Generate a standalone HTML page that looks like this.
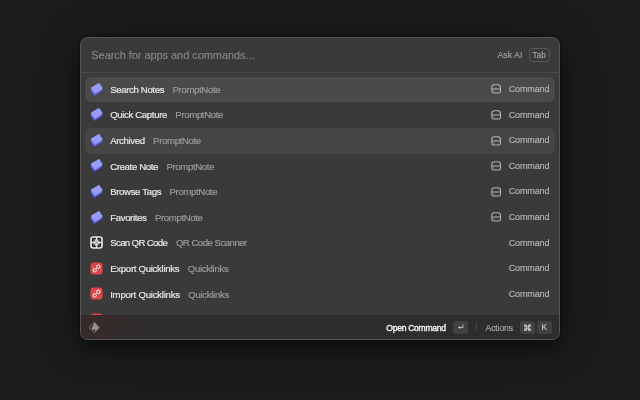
<!DOCTYPE html>
<html><head><meta charset="utf-8">
<style>
*{margin:0;padding:0;box-sizing:border-box}
html,body{width:640px;height:400px;overflow:hidden;background:#1c1c1c;font-family:"Liberation Sans",sans-serif;-webkit-font-smoothing:antialiased}
.win{will-change:transform;position:absolute;left:80px;top:37px;width:480px;height:303px;background:#3a3a3a;border:1px solid #565656;border-radius:7.5px;overflow:hidden;box-shadow:0 0 0 1px rgba(0,0,0,0.35),0 8px 22px rgba(0,0,0,0.5),0 4px 44px rgba(0,0,0,0.25)}
.sep{position:absolute;left:0;top:34px;width:100%;height:1px;background:#474747}
.ph{position:absolute;left:10.3px;top:6px;font-size:11px;line-height:22px;color:#898989;letter-spacing:-0.06px;white-space:pre;-webkit-text-stroke:0.1px #898989}
.ask{position:absolute;left:416.5px;top:9px;font-size:8.8px;line-height:16px;color:#a0a0a0;white-space:pre;-webkit-text-stroke:0.15px #a0a0a0}
.tab{position:absolute;left:447.6px;top:9.6px;width:21.2px;height:14.4px;border:1px solid #585858;border-radius:3.5px;font-size:8.2px;line-height:14px;color:#aaaaaa;text-align:center;-webkit-text-stroke:0.1px #aaa}
.row{position:absolute;left:4px;width:470px;height:25.6px}
.row.hl{background:#4a4a4a;border-radius:6px}
.row.hl2{background:#454545;border-radius:6px}
.ico{position:absolute;left:5px;top:5.7px;width:13px;height:13px}
.t{position:absolute;left:25.2px;top:-0.1px;line-height:25.6px;font-size:9.6px;letter-spacing:-0.35px;color:#e8e8e8;white-space:pre;-webkit-text-stroke:0.18px #e8e8e8}
.t span{-webkit-text-stroke:0.15px #9d9d9d}
.t span{color:#9d9d9d;margin-left:8.4px}
.rc{position:absolute;right:5.7px;top:0.1px;line-height:25.6px;font-size:9px;letter-spacing:-0.12px;color:#b0b0b0;white-space:pre;-webkit-text-stroke:0.2px #b0b0b0}
.di{position:absolute;left:406px;top:7.5px;width:10.5px;height:10px}
.foot{position:absolute;left:0;top:276.6px;width:100%;height:26px;background:radial-gradient(ellipse 55px 60px at 15px 4px,rgba(72,38,38,0.42),rgba(72,38,38,0.2) 50%,rgba(72,38,38,0) 100%),#2d2d2d}
.ft{position:absolute;top:1.4px;line-height:24px;font-size:8.6px;white-space:pre}
.key{position:absolute;top:6.4px;height:13px;background:#414141;border-radius:3px;color:#c8c8c8;font-size:8.4px;line-height:13px;text-align:center}
</style></head><body>
<div class="win">
  <div class="ph">Search for apps and commands...</div>
  <div class="ask">Ask AI</div>
  <div class="tab">Tab</div>
  <div class="sep"></div>

  <div class="row hl" style="top:38.9px">
    <svg class="ico" viewBox="0 0 13 13"><g stroke-linejoin="round" stroke-width="1.8">
      <path d="M8.3 3.1 L11.0 7.5 L4.5 11.7 L1.4 7.2 Z" fill="#4f57ef" stroke="#4f57ef"/>
      <path d="M8.6 2.0 L11.3 6.4 L4.8 10.6 L1.7 6.1 Z" fill="#6a72f4" stroke="#6a72f4"/>
      <path d="M8.9 0.9 L11.6 5.2 L5.1 9.4 L2.0 5.0 Z" fill="#979cf8" stroke="#979cf8"/></g></svg>
    <div class="t">Search Notes<span>PromptNote</span></div>
    <svg class="di" viewBox="0 0 10.5 10"><g>
      <path d="M0.8 7.2 V3.4 Q0.8 0.7 3.5 0.7 H6.8 Q9.5 0.7 9.5 3.4 V7.2 Q9.5 9.0 7.7 9.0 H2.6 Q0.8 9.0 0.8 7.2 Z M0.8 5.0 H9.5" fill="none" stroke="#b4b4b4" stroke-width="1.05"/>
      <line x1="2.3" y1="7.0" x2="3.5" y2="7.0" stroke="#b4b4b4" stroke-width="0.8"/></g></svg>
    <div class="rc">Command</div>
  </div>
  <div class="row" style="top:64.5px">
    <svg class="ico" viewBox="0 0 13 13"><g stroke-linejoin="round" stroke-width="1.8">
      <path d="M8.3 3.1 L11.0 7.5 L4.5 11.7 L1.4 7.2 Z" fill="#4f57ef" stroke="#4f57ef"/>
      <path d="M8.6 2.0 L11.3 6.4 L4.8 10.6 L1.7 6.1 Z" fill="#6a72f4" stroke="#6a72f4"/>
      <path d="M8.9 0.9 L11.6 5.2 L5.1 9.4 L2.0 5.0 Z" fill="#979cf8" stroke="#979cf8"/></g></svg>
    <div class="t">Quick Capture<span>PromptNote</span></div>
    <svg class="di" viewBox="0 0 10.5 10"><g>
      <path d="M0.8 7.2 V3.4 Q0.8 0.7 3.5 0.7 H6.8 Q9.5 0.7 9.5 3.4 V7.2 Q9.5 9.0 7.7 9.0 H2.6 Q0.8 9.0 0.8 7.2 Z M0.8 5.0 H9.5" fill="none" stroke="#b4b4b4" stroke-width="1.05"/>
      <line x1="2.3" y1="7.0" x2="3.5" y2="7.0" stroke="#b4b4b4" stroke-width="0.8"/></g></svg>
    <div class="rc">Command</div>
  </div>
  <div class="row hl2" style="top:90.1px">
    <svg class="ico" viewBox="0 0 13 13"><g stroke-linejoin="round" stroke-width="1.8">
      <path d="M8.3 3.1 L11.0 7.5 L4.5 11.7 L1.4 7.2 Z" fill="#4f57ef" stroke="#4f57ef"/>
      <path d="M8.6 2.0 L11.3 6.4 L4.8 10.6 L1.7 6.1 Z" fill="#6a72f4" stroke="#6a72f4"/>
      <path d="M8.9 0.9 L11.6 5.2 L5.1 9.4 L2.0 5.0 Z" fill="#979cf8" stroke="#979cf8"/></g></svg>
    <div class="t">Archived<span>PromptNote</span></div>
    <svg class="di" viewBox="0 0 10.5 10"><g>
      <path d="M0.8 7.2 V3.4 Q0.8 0.7 3.5 0.7 H6.8 Q9.5 0.7 9.5 3.4 V7.2 Q9.5 9.0 7.7 9.0 H2.6 Q0.8 9.0 0.8 7.2 Z M0.8 5.0 H9.5" fill="none" stroke="#b4b4b4" stroke-width="1.05"/>
      <line x1="2.3" y1="7.0" x2="3.5" y2="7.0" stroke="#b4b4b4" stroke-width="0.8"/></g></svg>
    <div class="rc">Command</div>
  </div>
  <div class="row" style="top:115.7px">
    <svg class="ico" viewBox="0 0 13 13"><g stroke-linejoin="round" stroke-width="1.8">
      <path d="M8.3 3.1 L11.0 7.5 L4.5 11.7 L1.4 7.2 Z" fill="#4f57ef" stroke="#4f57ef"/>
      <path d="M8.6 2.0 L11.3 6.4 L4.8 10.6 L1.7 6.1 Z" fill="#6a72f4" stroke="#6a72f4"/>
      <path d="M8.9 0.9 L11.6 5.2 L5.1 9.4 L2.0 5.0 Z" fill="#979cf8" stroke="#979cf8"/></g></svg>
    <div class="t">Create Note<span>PromptNote</span></div>
    <svg class="di" viewBox="0 0 10.5 10"><g>
      <path d="M0.8 7.2 V3.4 Q0.8 0.7 3.5 0.7 H6.8 Q9.5 0.7 9.5 3.4 V7.2 Q9.5 9.0 7.7 9.0 H2.6 Q0.8 9.0 0.8 7.2 Z M0.8 5.0 H9.5" fill="none" stroke="#b4b4b4" stroke-width="1.05"/>
      <line x1="2.3" y1="7.0" x2="3.5" y2="7.0" stroke="#b4b4b4" stroke-width="0.8"/></g></svg>
    <div class="rc">Command</div>
  </div>
  <div class="row" style="top:141.3px">
    <svg class="ico" viewBox="0 0 13 13"><g stroke-linejoin="round" stroke-width="1.8">
      <path d="M8.3 3.1 L11.0 7.5 L4.5 11.7 L1.4 7.2 Z" fill="#4f57ef" stroke="#4f57ef"/>
      <path d="M8.6 2.0 L11.3 6.4 L4.8 10.6 L1.7 6.1 Z" fill="#6a72f4" stroke="#6a72f4"/>
      <path d="M8.9 0.9 L11.6 5.2 L5.1 9.4 L2.0 5.0 Z" fill="#979cf8" stroke="#979cf8"/></g></svg>
    <div class="t">Browse Tags<span>PromptNote</span></div>
    <svg class="di" viewBox="0 0 10.5 10"><g>
      <path d="M0.8 7.2 V3.4 Q0.8 0.7 3.5 0.7 H6.8 Q9.5 0.7 9.5 3.4 V7.2 Q9.5 9.0 7.7 9.0 H2.6 Q0.8 9.0 0.8 7.2 Z M0.8 5.0 H9.5" fill="none" stroke="#b4b4b4" stroke-width="1.05"/>
      <line x1="2.3" y1="7.0" x2="3.5" y2="7.0" stroke="#b4b4b4" stroke-width="0.8"/></g></svg>
    <div class="rc">Command</div>
  </div>
  <div class="row" style="top:166.9px">
    <svg class="ico" viewBox="0 0 13 13"><g stroke-linejoin="round" stroke-width="1.8">
      <path d="M8.3 3.1 L11.0 7.5 L4.5 11.7 L1.4 7.2 Z" fill="#4f57ef" stroke="#4f57ef"/>
      <path d="M8.6 2.0 L11.3 6.4 L4.8 10.6 L1.7 6.1 Z" fill="#6a72f4" stroke="#6a72f4"/>
      <path d="M8.9 0.9 L11.6 5.2 L5.1 9.4 L2.0 5.0 Z" fill="#979cf8" stroke="#979cf8"/></g></svg>
    <div class="t">Favorites<span>PromptNote</span></div>
    <svg class="di" viewBox="0 0 10.5 10"><g>
      <path d="M0.8 7.2 V3.4 Q0.8 0.7 3.5 0.7 H6.8 Q9.5 0.7 9.5 3.4 V7.2 Q9.5 9.0 7.7 9.0 H2.6 Q0.8 9.0 0.8 7.2 Z M0.8 5.0 H9.5" fill="none" stroke="#b4b4b4" stroke-width="1.05"/>
      <line x1="2.3" y1="7.0" x2="3.5" y2="7.0" stroke="#b4b4b4" stroke-width="0.8"/></g></svg>
    <div class="rc">Command</div>
  </div>
  <div class="row" style="top:192.5px">
    <svg class="ico" viewBox="0 0 13 13"><g>
      <rect x="0.2" y="0.2" width="12.6" height="12.6" rx="3" fill="#e6e6e6"/>
      <g fill="none" stroke="#262626" stroke-width="1.5" stroke-linecap="round" stroke-linejoin="round">
        <path d="M2.6 5.2 V3.2 Q2.6 2.6 3.2 2.6 H5.2"/>
        <path d="M7.8 2.6 H9.8 Q10.4 2.6 10.4 3.2 V5.2"/>
        <path d="M2.6 7.8 V9.8 Q2.6 10.4 3.2 10.4 H5.2"/>
        <path d="M10.4 7.8 V9.8 Q10.4 10.4 9.8 10.4 H7.8"/>
      </g>
      <g fill="#484848">
        <rect x="3" y="3" width="2.4" height="2.4" rx="0.6"/>
        <rect x="7.6" y="3" width="2.4" height="2.4" rx="0.6"/>
        <rect x="3" y="7.6" width="2.4" height="2.4" rx="0.6"/>
        <rect x="7.6" y="7.6" width="2.4" height="2.4" rx="0.6"/>
      </g>
      <circle cx="6.5" cy="6.5" r="2.1" fill="#a9a9a9" stroke="#e6e6e6" stroke-width="0.8"/></g></svg>
    <div class="t" style="letter-spacing:-0.62px">Scan QR Code<span style="letter-spacing:-0.5px;margin-left:8.6px">QR Code Scanner</span></div>
    <div class="rc">Command</div>
  </div>
  <div class="row" style="top:218.1px">
    <svg class="ico" viewBox="0 0 13 13"><g>
      <rect x="0.5" y="0.5" width="12" height="12" rx="3" fill="#df4545"/>
      <g fill="none" stroke="#f4f4f4" stroke-width="1.05" stroke-linecap="round">
        <path d="M5.6 7.4 L7.4 5.6"/>
        <path d="M6.4 4.4 L7.3 3.5 A1.55 1.55 0 0 1 9.5 5.7 L8.6 6.6"/>
        <path d="M6.6 8.6 L5.7 9.5 A1.55 1.55 0 0 1 3.5 7.3 L4.4 6.4"/>
      </g></g></svg>
    <div class="t" style="letter-spacing:-0.29px">Export Quicklinks<span style="letter-spacing:-0.3px">Quicklinks</span></div>
    <div class="rc">Command</div>
  </div>
  <div class="row" style="top:243.7px">
    <svg class="ico" viewBox="0 0 13 13"><g>
      <rect x="0.5" y="0.5" width="12" height="12" rx="3" fill="#df4545"/>
      <g fill="none" stroke="#f4f4f4" stroke-width="1.05" stroke-linecap="round">
        <path d="M5.6 7.4 L7.4 5.6"/>
        <path d="M6.4 4.4 L7.3 3.5 A1.55 1.55 0 0 1 9.5 5.7 L8.6 6.6"/>
        <path d="M6.6 8.6 L5.7 9.5 A1.55 1.55 0 0 1 3.5 7.3 L4.4 6.4"/>
      </g></g></svg>
    <div class="t" style="letter-spacing:-0.23px">Import Quicklinks<span style="letter-spacing:-0.3px">Quicklinks</span></div>
    <div class="rc">Command</div>
  </div>
  <div class="row" style="top:269.3px">
    <svg class="ico" viewBox="0 0 13 13"><g>
      <rect x="0.5" y="0.5" width="12" height="12" rx="3" fill="#df4545"/>
      <g fill="none" stroke="#f4f4f4" stroke-width="1.05" stroke-linecap="round">
        <path d="M5.6 7.4 L7.4 5.6"/>
        <path d="M6.4 4.4 L7.3 3.5 A1.55 1.55 0 0 1 9.5 5.7 L8.6 6.6"/>
        <path d="M6.6 8.6 L5.7 9.5 A1.55 1.55 0 0 1 3.5 7.3 L4.4 6.4"/>
      </g></g></svg>
  </div>

  <div class="foot">
    <svg style="position:absolute;left:7px;top:6.4px;width:13px;height:13px" viewBox="0 0 13 13">
      <path d="M6.3 1.2 L11.6 6.4 L6.3 11.6 L1.0 6.4 Z" fill="none" stroke="#7c7a7a" stroke-width="1" stroke-linejoin="round"/>
      <path d="M6.3 1.7 L11.0 6.4 L7.4 10.0 L6.4 8.6 L4.4 8.9 L3.8 7.2 Z" fill="#959393"/>
    </svg>
    <div class="ft" style="left:305.3px;color:#ececec;font-weight:400;letter-spacing:-0.3px;font-size:8.6px;-webkit-text-stroke:0.4px #ececec">Open Command</div>
    <div class="key" style="left:371.8px;width:15.5px">
      <svg style="position:absolute;left:4px;top:3px;width:7px;height:6px" viewBox="0 0 7 6"><path d="M6 0.6 V3.5 H2" fill="none" stroke="#c4c4c4" stroke-width="0.9"/><path d="M0.9 3.5 L3.1 1.9 V5.1 Z" fill="#c4c4c4"/></svg>
    </div>
    <div style="position:absolute;left:395.3px;top:8.4px;width:1px;height:7px;background:#464646"></div>
    <div class="ft" style="left:404.5px;color:#a8a8a8;letter-spacing:-0.1px;-webkit-text-stroke:0.15px #a8a8a8">Actions</div>
    <div class="key" style="left:438.8px;width:15px"><svg style="position:absolute;left:4px;top:2.9px;width:7px;height:7.4px" viewBox="0 0 7 7"><g fill="none" stroke="#c6c6c6" stroke-width="1.05"><path d="M2.5 1.5 V5.5 M4.5 1.5 V5.5 M1.5 2.5 H5.5 M1.5 4.5 H5.5"/><path d="M2.5 2.5 H1.5 A1 1 0 1 1 2.5 1.5 Z M4.5 2.5 V1.5 A1 1 0 1 1 5.5 2.5 Z M2.5 4.5 V5.5 A1 1 0 1 1 1.5 4.5 Z M4.5 4.5 H5.5 A1 1 0 1 1 4.5 5.5 Z"/></g></svg></div>
    <div class="key" style="left:455.8px;width:15px;font-size:8.2px;-webkit-text-stroke:0.2px #c8c8c8">K</div>
  </div>
</div>


</body></html>
